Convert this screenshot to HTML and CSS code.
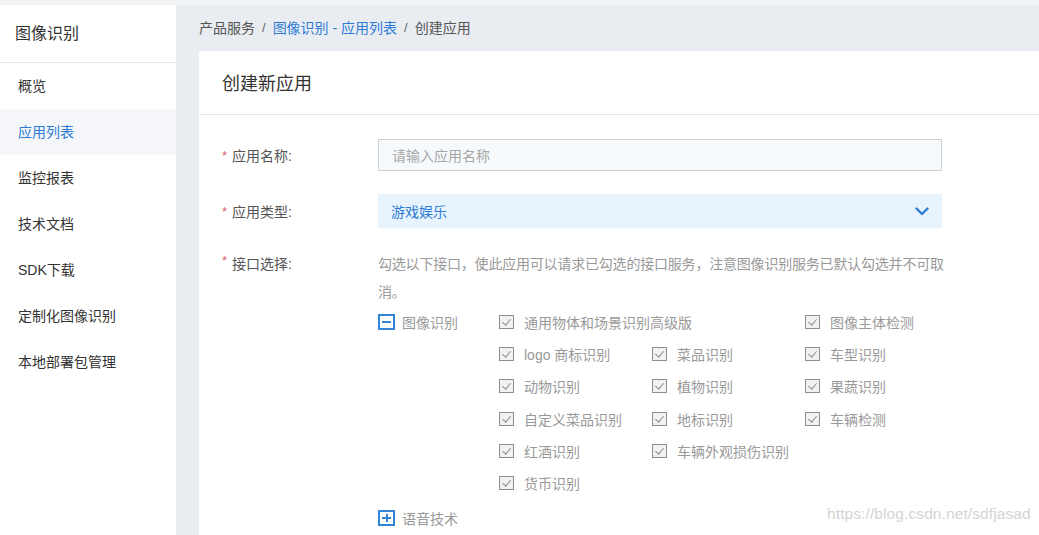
FILE: index.html
```html
<!DOCTYPE html>
<html lang="zh-CN">
<head>
<meta charset="utf-8">
<title>创建应用</title>
<link rel="stylesheet" href="styles.css">
</head>
<body>
<div class="topstrip"></div>
<div class="layout">
  <aside class="sidebar">
    <div class="side-title">图像识别</div>
    <ul class="menu">
      <li class="menu-item">概览</li>
      <li class="menu-item active">应用列表</li>
      <li class="menu-item">监控报表</li>
      <li class="menu-item">技术文档</li>
      <li class="menu-item">SDK下载</li>
      <li class="menu-item">定制化图像识别</li>
      <li class="menu-item">本地部署包管理</li>
    </ul>
  </aside>
  <main class="main">
    <div class="breadcrumb">
      <span>产品服务</span><span class="sep">/</span><span class="link">图像识别 - 应用列表</span><span class="sep">/</span><span>创建应用</span>
    </div>
    <section class="card">
      <div class="card-header">创建新应用</div>
      <div class="form">
        <div class="row">
          <div class="label"><span class="star">*</span>应用名称:</div>
          <div class="control"><div class="input">请输入应用名称</div></div>
        </div>
        <div class="row">
          <div class="label"><span class="star">*</span>应用类型:</div>
          <div class="control">
            <div class="select"><span>游戏娱乐</span>
              <svg class="chev" width="14" height="9" viewBox="0 0 14 9"><path d="M1.5 1.5 L7 7 L12.5 1.5" fill="none" stroke="#2e7bd6" stroke-width="2.4" stroke-linecap="round" stroke-linejoin="round"/></svg>
            </div>
          </div>
        </div>
        <div class="row row-api">
          <div class="label label-api"><span class="star">*</span>接口选择:</div>
          <div class="control">
            <p class="desc">勾选以下接口，使此应用可以请求已勾选的接口服务，注意图像识别服务已默认勾选并不可取消。</p>
            <div class="tree">
              <div class="tree-node">
                <div class="tree-head"><span class="toggle minus"></span><span>图像识别</span></div>
                <div class="checks">
                  <div class="chk span2"><span class="box"></span>通用物体和场景识别高级版</div>
                  <div class="chk"><span class="box"></span>图像主体检测</div>
                  <div class="chk"><span class="box"></span>logo 商标识别</div>
                  <div class="chk"><span class="box"></span>菜品识别</div>
                  <div class="chk"><span class="box"></span>车型识别</div>
                  <div class="chk"><span class="box"></span>动物识别</div>
                  <div class="chk"><span class="box"></span>植物识别</div>
                  <div class="chk"><span class="box"></span>果蔬识别</div>
                  <div class="chk"><span class="box"></span>自定义菜品识别</div>
                  <div class="chk"><span class="box"></span>地标识别</div>
                  <div class="chk"><span class="box"></span>车辆检测</div>
                  <div class="chk"><span class="box"></span>红酒识别</div>
                  <div class="chk span2"><span class="box"></span>车辆外观损伤识别</div>
                  <div class="chk"><span class="box"></span>货币识别</div>
                </div>
              </div>
              <div class="tree-node collapsed">
                <div class="tree-head"><span class="toggle plus"></span><span>语音技术</span></div>
              </div>
            </div>
          </div>
        </div>
      </div>
    </section>
  </main>
</div>
<div class="watermark">https://blog.csdn.net/sdfjasad</div>
</body>
</html>
```

FILE: styles.css
```css
* { box-sizing: border-box; }
html, body { margin: 0; padding: 0; }
body {
  width: 1039px;
  height: 535px;
  overflow: hidden;
  font-family: "Liberation Sans", "Noto Sans CJK SC", sans-serif;
  font-size: 14px;
  color: #333;
  background: #e9edf2;
  position: relative;
}
.topstrip { height: 5px; background: #f2f3f4; }
.layout { display: flex; height: 530px; }
.sidebar { width: 176px; flex: none; background: #fff; }
.side-title {
  height: 58px;
  padding-left: 15px;
  padding-bottom: 4px;
  display: flex;
  align-items: center;
  font-size: 16px;
  color: #333;
  border-bottom: 1px solid #e8e8e8;
}
.menu { list-style: none; margin: 0; padding: 0; }
.menu-item {
  height: 46px;
  display: flex;
  align-items: center;
  padding-left: 18px;
  padding-bottom: 3px;
  font-size: 14px;
  color: #333;
}
.menu-item.active { background: #f4f6f9; color: #2e7bd6; }
.main {
  flex: 1;
  display: flex;
  flex-direction: column;
  padding-left: 23px;
  min-width: 0;
  min-height: 0;
}
.breadcrumb {
  flex: none;
  height: 46px;
  display: flex;
  align-items: center;
  padding-bottom: 2px;
  font-size: 14px;
  color: #555;
}
.breadcrumb .sep { margin: 0 7px; color: #666; font-size: 13px; }
.breadcrumb .link { color: #2e7bd6; }
.card {
  flex: 1;
  min-height: 0;
  overflow: hidden;
  background: #fff;
  display: flex;
  flex-direction: column;
}
.card-header {
  flex: none;
  height: 64px;
  display: flex;
  align-items: center;
  padding-left: 23px;
  padding-bottom: 2px;
  font-size: 18px;
  color: #333;
  border-bottom: 1px solid #e6e6e6;
}
.form { flex: none; padding: 24px 0 0 23px; }
.row { display: flex; margin-bottom: 23px; }
.label {
  width: 156px;
  flex: none;
  display: flex;
  align-items: center;
  font-size: 14px;
  color: #555;
}
.label-api { align-items: flex-start; height: 28px; padding-top: 2px; }
.star { color: #e06666; margin-right: 5px; font-size: 13px; }
.control { flex: none; width: 564px; }
.input {
  height: 32px;
  border: 1px solid #cfcfcf;
  background: #f7fafc;
  display: flex;
  align-items: center;
  padding-left: 13px;
  padding-bottom: 1px;
  color: #a6a6a6;
  font-size: 14px;
}
.select {
  height: 34px;
  background: #e8f4fd;
  display: flex;
  align-items: center;
  justify-content: space-between;
  padding: 0 13px 1px 13px;
  color: #2e7bd6;
  font-size: 14px;
}
.chev { display: block; margin-top: 1px; }
.row-api .control { width: 580px; }
.desc {
  margin: 0;
  width: 568px;
  font-size: 14px;
  letter-spacing: -0.2px;
  line-height: 28px;
  color: #999;
  margin-top: -1px;
}
.tree-node { display: flex; }
.tree-head {
  width: 121px;
  flex: none;
  display: flex;
  align-items: center;
  height: 32px;
  font-size: 14px;
  color: #999;
}
.toggle {
  width: 17px;
  height: 16px;
  border: 2px solid #3384d6;
  margin-right: 7px;
  position: relative;
  flex: none;
}
.toggle::before {
  content: "";
  position: absolute;
  left: 2px;
  right: 2px;
  top: 5px;
  height: 2px;
  background: #3384d6;
}
.toggle.plus::after {
  content: "";
  position: absolute;
  top: 2px;
  bottom: 2px;
  left: 5.5px;
  width: 2px;
  background: #3384d6;
}
.checks {
  display: grid;
  grid-template-columns: repeat(3, 153px);
  grid-auto-rows: 32.2px;
}
.chk {
  display: flex;
  align-items: center;
  font-size: 14px;
  color: #999;
  white-space: nowrap;
}
.chk.span2 { grid-column: span 2; }
.box {
  width: 15px;
  height: 14px;
  border: 1px solid #8e8e8e;
  background: #f2f2f2;
  margin-right: 10px;
  position: relative;
  flex: none;
}
.box::after {
  content: "";
  position: absolute;
  left: 4px;
  top: 1px;
  width: 4px;
  height: 7px;
  border-right: 1px solid #8a8a8a;
  border-bottom: 1px solid #8a8a8a;
  transform: rotate(40deg);
}
.tree-node.collapsed { margin-top: 3px; }
.watermark {
  position: absolute;
  left: 827px;
  top: 505px;
  font-family: "Liberation Sans", sans-serif;
  font-size: 15.5px;
  color: #d4d4d4;
  letter-spacing: 0.1px;
}
```
